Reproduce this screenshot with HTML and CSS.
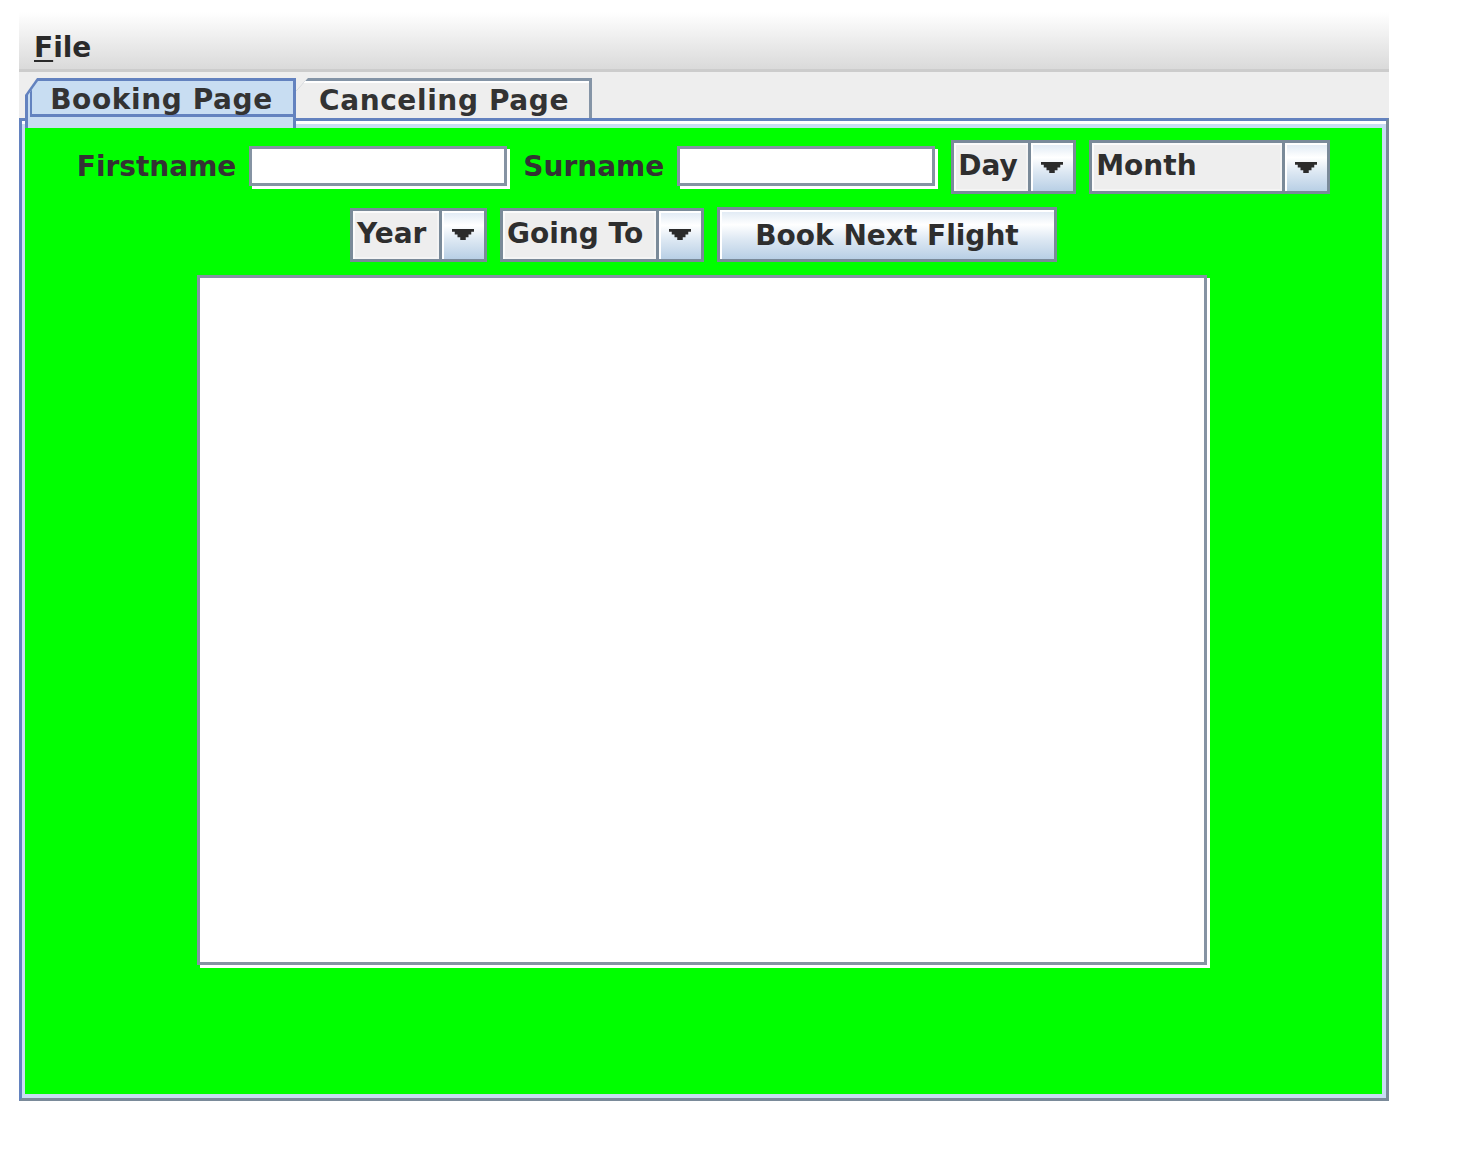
FILE: index.html
```html
<!DOCTYPE html>
<html>
<head>
<meta charset="utf-8">
<link rel="stylesheet" href="styles.css">
</head>
<body>
<div class="window">
  <div class="menubar"><span class="menu"><u>F</u>ile</span></div>
  <div class="tabarea">
    <div class="tabs">
      <div class="tab tab-sel"><div class="tab-in"><div class="focus">Booking Page</div></div></div>
      <div class="tab tab-un"><div class="tab-in">Canceling Page</div></div>
    </div>
    <div class="content">
      <div class="green">
        <div class="row">
          <span class="label">Firstname</span>
          <div class="field"></div>
          <span class="label">Surname</span>
          <div class="field"></div>
          <div class="combo">
            <div class="combo-val w-day">Day</div>
            <div class="combo-btn"><svg width="22" height="11" viewBox="0 0 8 4" preserveAspectRatio="none"><path d="M0 0h8v1h-1v1h-1v1h-1v1h-2v-1h-1v-1h-1v-1h-1z" fill="#2b2b2b"/></svg></div>
          </div>
          <div class="combo">
            <div class="combo-val w-month">Month</div>
            <div class="combo-btn"><svg width="22" height="11" viewBox="0 0 8 4" preserveAspectRatio="none"><path d="M0 0h8v1h-1v1h-1v1h-1v1h-2v-1h-1v-1h-1v-1h-1z" fill="#2b2b2b"/></svg></div>
          </div>
        </div>
        <div class="row">
          <div class="combo">
            <div class="combo-val w-year">Year</div>
            <div class="combo-btn"><svg width="22" height="11" viewBox="0 0 8 4" preserveAspectRatio="none"><path d="M0 0h8v1h-1v1h-1v1h-1v1h-2v-1h-1v-1h-1v-1h-1z" fill="#2b2b2b"/></svg></div>
          </div>
          <div class="combo">
            <div class="combo-val w-going">Going To</div>
            <div class="combo-btn"><svg width="22" height="11" viewBox="0 0 8 4" preserveAspectRatio="none"><path d="M0 0h8v1h-1v1h-1v1h-1v1h-2v-1h-1v-1h-1v-1h-1z" fill="#2b2b2b"/></svg></div>
          </div>
          <div class="button">Book Next Flight</div>
        </div>
        <div class="textarea"></div>
      </div>
    </div>
  </div>
</div>
</body>
</html>
```
FILE: styles.css
```css
body {
  margin: 0;
  background: #fff;
  font-family: "DejaVu Sans", "Liberation Sans", sans-serif;
  font-weight: bold;
  font-size: 28px;
  color: #333;
}
.window {
  margin: 12px 0 0 19px;
  width: 1370px;
}
.menubar {
  height: 37px;
  padding: 20px 0 0 15px;
  background: linear-gradient(#ffffff, #dadada);
  border-bottom: 3px solid #cccccc;
}
.menu {
  display: block;
  line-height: 32px;
  color: #2a2a2a;
}
.menu u {
  text-decoration-thickness: 2px;
  text-underline-offset: 3px;
}
.tabarea {
  background: #eeeeee;
  padding-top: 6px;
}
.tabs {
  display: flex;
  height: 40px;
  padding-left: 6px;
}
.tab {
  box-sizing: border-box;
  height: 40px;
  letter-spacing: 0.6px;
}
.tab-sel {
  width: 271px;
  height: 50px;
  margin-bottom: -10px;
  position: relative;
  z-index: 1;
  background: #6382bf;
  padding: 3px 3px 0 3px;
  clip-path: polygon(12px 0, 100% 0, 100% 100%, 0 100%, 0 17px);
}
.tab-sel .tab-in {
  height: 100%;
  box-sizing: border-box;
  background: #c8ddf2;
  padding: 0 0 11px 2px;
  clip-path: polygon(10px 0, 100% 0, 100% 100%, 0 100%, 0 14px);
}
.focus {
  height: 100%;
  box-sizing: border-box;
  border-left: 2px solid #6382bf;
  border-bottom: 3px solid #6382bf;
  display: flex;
  align-items: center;
  justify-content: center;
  line-height: 32px;
  padding: 4px 2px 0 0;
}
.tab-un {
  width: 296px;
  background: #8494a6;
  padding: 3px 3px 0 0;
  clip-path: polygon(12px 0, 100% 0, 100% 100%, 0 100%, 0 13px);
}
.tab-un .tab-in {
  height: 100%;
  box-sizing: border-box;
  background: #eeeeee;
  box-shadow: inset 0 2px 0 #fff;
  clip-path: polygon(9px 0, 100% 0, 100% 100%, 0 100%, 0 9px);
  display: flex;
  align-items: center;
  justify-content: center;
  padding-left: 3px;
  padding-top: 2px;
  line-height: 32px;
}
.content {
  border-style: solid;
  border-width: 3px;
  border-color: #6382bf #7a8a99 #7a8a99 #6382bf;
  padding: 7px 4px 4px 3px;
  background: linear-gradient(#ffffff 0 3px, #c8ddf2 3px);
}
.green {
  background: #00ff00;
  height: 966px;
  box-sizing: border-box;
  padding-top: 12px;
  display: flex;
  flex-direction: column;
  align-items: center;
  gap: 13px;
}
.row {
  display: flex;
  align-items: center;
  gap: 13px;
}
.label {
  line-height: 32px;
  color: #333;
}
.field {
  width: 258px;
  height: 40px;
  box-sizing: border-box;
  background: #fff;
  border: 3px solid #8593a3;
  box-shadow: 3px 3px 0 #fff;
  margin: 0 3px 3px 0;
}
.combo {
  display: flex;
  height: 54px;
  box-sizing: border-box;
  border: 3px solid #7a8a99;
}
.combo-val {
  background: #eeeeee;
  padding-left: 4px;
  box-sizing: border-box;
  line-height: 45px;
  box-shadow: inset 2px 2px 0 #fbfbfb, inset -2px -2px 0 #f4f4f4;
  white-space: nowrap;
  color: #2e2e2e;
}
.w-day { width: 74px; }
.w-month { width: 190px; }
.w-year { width: 86px; }
.w-going { width: 153px; }
.combo-btn {
  width: 42px;
  border-left: 3px solid #7a8a99;
  background: linear-gradient(#dde8f3 0%, #ffffff 30%, #dde8f3 60%, #b8cfe5 100%);
  box-shadow: inset 2px 2px 0 #fff;
  display: flex;
  align-items: center;
  justify-content: center;
}
.combo-btn svg {
  display: block;
}
.button {
  width: 340px;
  height: 55px;
  box-sizing: border-box;
  border: 3px solid #7a8a99;
  background: linear-gradient(#dde8f3 0%, #ffffff 30%, #dde8f3 60%, #b8cfe5 100%);
  box-shadow: inset 2px 2px 0 #fff;
  display: flex;
  align-items: center;
  justify-content: center;
  padding-top: 2px;
  line-height: 32px;
  color: #2e2e2e;
}
.textarea {
  width: 1010px;
  height: 690px;
  box-sizing: border-box;
  background: #fff;
  border: 3px solid #8593a3;
  box-shadow: 3px 3px 0 #fff;
  margin: 0 3px 3px 0;
}
```
